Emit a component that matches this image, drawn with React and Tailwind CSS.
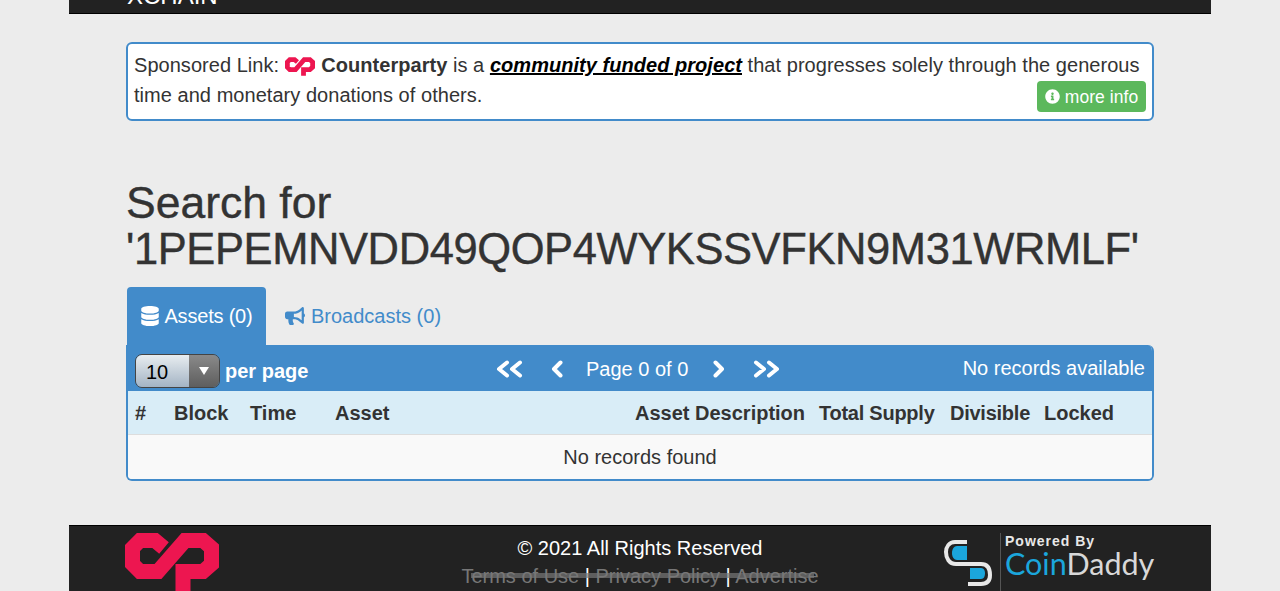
import React from 'react';
import { FaBullhorn, FaDatabase, FaInfoCircle } from 'react-icons/fa';

const CounterpartyLogo = ({ className, color = '#ed1650' }) => (
  <svg className={className} viewBox="0 0 94 58" fill="none">
    <path
      d="M39 15 L30 7.5 H15 L7.5 15 V31 L15 38.5 H33 L60 7.5 H78 L86.5 15 V31 L78 38.5 H58 V58"
      stroke={color}
      strokeWidth="15"
      strokeLinejoin="miter"
    />
  </svg>
);

const CoinDaddyMark = () => (
  <svg className="w-[52px] h-[50px] shrink-0" viewBox="0 0 52 50" fill="none">
    <path d="M24 4 H12 C6 4 3 9 3 14 C3 20 6 26 13 26 H38 C45 26 47 31 47 37 C47 43 44 46 38 46 H25" stroke="#e8e8e8" strokeWidth="4" />
    <path d="M24 8 H14 C11 8 9 11 9 15 C9 19 11 22 14 22 H24 Z" fill="#1ba6dc" />
    <path d="M27 30 H38 C41 30 42 33 42 35 C42 38 41 41 38 41 H27 Z" fill="#1ba6dc" />
  </svg>
);

const Chevron = ({ flip }) => (
  <svg className={flip ? 'w-[12px] h-[18px] -scale-x-100' : 'w-[12px] h-[18px]'} viewBox="0 0 12 18" fill="none">
    <path d="M9.5 2.5 L3 9 L9.5 15.5" stroke="white" strokeWidth="4" strokeLinecap="round" strokeLinejoin="round" />
  </svg>
);

const DoubleChevron = ({ flip }) => (
  <svg className={flip ? 'w-[27px] h-[18px] -scale-x-100' : 'w-[27px] h-[18px]'} viewBox="0 0 27 18" fill="none">
    <path d="M11 2.5 L3 9 L11 15.5 M24 2.5 L16 9 L24 15.5" stroke="white" strokeWidth="4" strokeLinecap="round" strokeLinejoin="round" />
  </svg>
);

const App = () => {
  return (
    <div className="h-screen overflow-hidden bg-[#ececec] text-[20px] leading-[30px] text-[#333] font-['Liberation_Sans',Arial,sans-serif]">
      <div className="mx-[69px]">
        {/* top bar, cut off by the viewport */}
        <header className="h-[14px] overflow-hidden bg-[#222] border-b border-black flex items-end justify-between pl-[58px] pr-[61px] pb-[5px]">
          <span className="text-[24px] leading-none text-white">XCHAIN</span>
          <div className="flex w-[265px] h-[1px] self-start -mt-[1px]">
            <div className="flex-1 bg-white" />
            <div className="w-[56px] bg-[#5cb85c]" />
          </div>
        </header>

        <main className="px-[57px] pt-[28px]">
          <div className="border-2 border-[#428bca] rounded-[6px] bg-white h-[79px] px-[6px] pt-[6px] tracking-[0.04px]">
            Sponsored Link: <CounterpartyLogo className="inline-block w-[30px] h-[19px] align-[-4px] mr-[1px]" />{' '}
            <b>Counterparty</b> is a{' '}
            <a className="font-bold italic underline text-black">community funded project</a> that progresses solely
            through the generous time and monetary donations of others.
            <a className="float-right mt-[1px] h-[31px] w-[109px] flex items-center justify-center gap-[5px] rounded-[4px] bg-[#5cb85c] text-[17.5px] text-white">
              <FaInfoCircle size={15} />
              more info
            </a>
          </div>

          <h1 className="mt-[59px] text-[44.5px] leading-[46px] font-normal [-webkit-text-stroke:0.4px]">
            Search for
            <br />
            <span className="text-[43.5px] tracking-[-0.4px]">{"'1PEPEMNVDD49QOP4WYKSSVFKN9M31WRMLF'"}</span>
          </h1>

          <div className="mt-[15px] flex items-stretch h-[58px] pl-[1px]">
            <div className="w-[139px] rounded-t-[4px] bg-[#428bca] text-white flex items-center justify-center gap-[4px]">
              <FaDatabase size={20} />
              <span className="tracking-[-0.2px]">Assets (0)</span>
            </div>
            <div className="pl-[19px] flex items-center gap-[6px] text-[#428bca]">
              <FaBullhorn size={20} />
              Broadcasts (0)
            </div>
          </div>

          <div className="border-2 border-t-0 border-[#428bca] rounded-b-[6px] rounded-tr-[6px] overflow-hidden">
            <div className="h-[46px] bg-[#428bca] text-white flex items-center pl-[7px] pr-[7px]">
              <div className="flex items-center w-[361px]">
                <div className="flex w-[85px] h-[34px] rounded-[7px] border border-[#444] overflow-hidden mt-[5px]">
                  <div className="flex-1 bg-gradient-to-b from-[#e8edf0] to-[#a4b4c4] text-black pl-[10px] leading-[34px]">10</div>
                  <div className="w-[30px] bg-gradient-to-b from-[#8a8a8a] to-[#5e5e5e] flex items-center justify-center">
                    <span className="w-0 h-0 border-x-[5px] border-x-transparent border-t-[8px] border-t-white" />
                  </div>
                </div>
                <b className="ml-[5px] mt-[5px]">per page</b>
              </div>
              <nav className="flex items-center mt-[1px]">
                <DoubleChevron />
                <span className="ml-[28px]"><Chevron /></span>
                <span className="ml-[23px]">Page 0 of 0</span>
                <span className="ml-[25px]"><Chevron flip /></span>
                <span className="ml-[28px]"><DoubleChevron flip /></span>
              </nav>
              <span className="ml-auto">No records available</span>
            </div>

            <div className="h-[44px] bg-[#d9edf7] border-b border-[#ddd] grid grid-cols-[39px_76px_85px_300px_184px_131px_94px_1fr] items-center pl-[7px] font-bold">
              <span>#</span>
              <span>Block</span>
              <span>Time</span>
              <span>Asset</span>
              <span>Asset Description</span>
              <span className="tracking-[-0.25px]">Total Supply</span>
              <span className="tracking-[-0.25px]">Divisible</span>
              <span>Locked</span>
            </div>
            <div className="h-[44px] bg-[#f9f9f9] flex items-center justify-center">No records found</div>
          </div>
        </main>

        {/* footer, cut off by the viewport */}
        <footer className="mt-[44px] h-[80px] bg-[#222] border-t border-black flex pl-[56px] pr-[57px]">
          <CounterpartyLogo className="w-[94px] h-[58px] mt-[7px] shrink-0" />
          <div className="flex-1 flex flex-col items-center pt-[7px] pl-[118px]">
            <div className="text-white leading-[30px]">© 2021 All Rights Reserved</div>
            <div className="relative leading-[26px] text-[#777]">
              Terms of Use <span className="text-white">|</span> Privacy Policy <span className="text-white">|</span> Advertise
              <div className="absolute left-[10px] right-[5px] top-[10px] h-[5px] bg-[#777]/70" />
            </div>
          </div>
          <div className="flex items-start w-[211px] shrink-0 pt-[12px]">
            <CoinDaddyMark />
            <div className="ml-[5px] -mt-[5px] border-l border-[#555] pl-[4px] h-[58px]">
              <div className="text-[14px] leading-[16px] font-bold text-[#e8e8e8] tracking-[1px]">Powered By</div>
              <div className="text-[30.5px] leading-[29px] font-['Lato',sans-serif]">
                <span className="text-[#1ba6dc]">Coin</span>
                <span className="text-[#d8d8d8]">Daddy</span>
              </div>
            </div>
          </div>
        </footer>
      </div>
    </div>
  );
};

export default App;
